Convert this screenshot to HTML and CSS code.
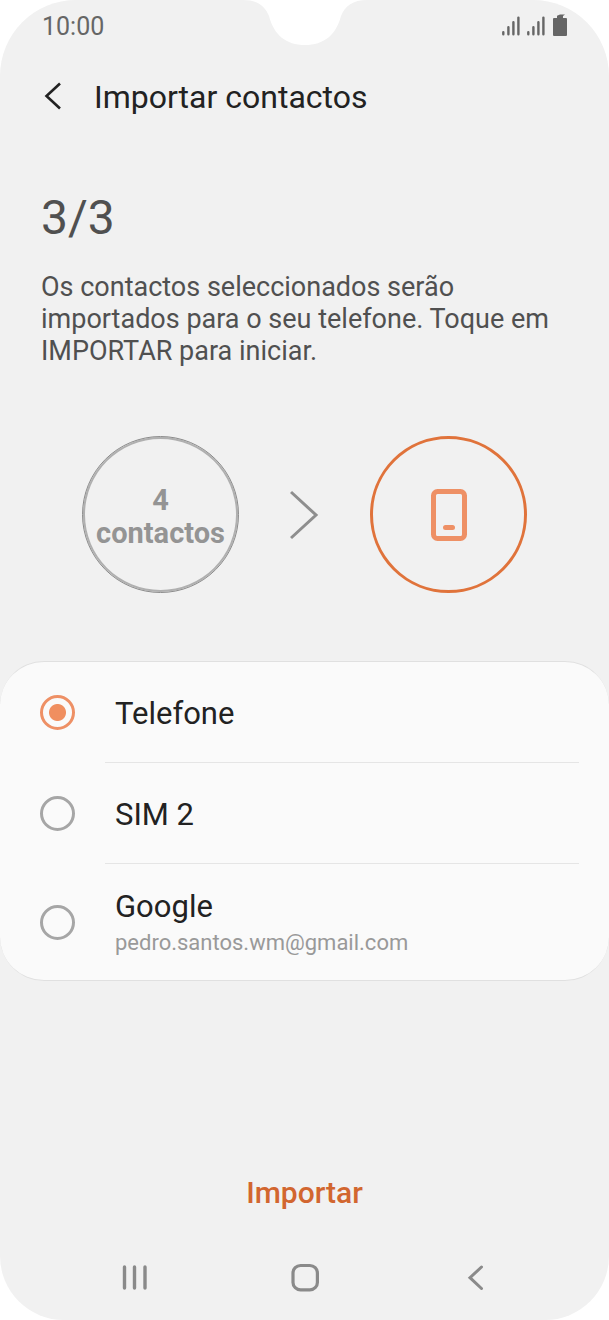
FILE: index.html
```html
<!DOCTYPE html>
<html lang="pt">
<head>
<meta charset="utf-8">
<meta name="viewport" content="width=device-width, initial-scale=1">
<title>Importar contactos</title>
<link rel="stylesheet" href="styles.css">
</head>
<body>
<div class="screen">
  <svg class="notch" viewBox="0 0 124 46" aria-hidden="true"><path d="M0 0C14 0 22 6 26 16C31 35 43 45 62 45S93 35 98 16C102 6 110 0 124 0Z" fill="#fff"/></svg>

  <div class="status">
    <time class="clock">10:00</time>
    <svg class="status-icons" width="67" height="24" viewBox="0 0 67 24" aria-hidden="true">
      <g stroke="#666" stroke-width="2.4" stroke-linecap="round">
        <path d="M2.3 18.3V20.300M7.4 13.3V20.300M12.4 8.3V20.300M17.4 3.600V20.300"/>
        <path d="M27.3 18.3V20.300M32.4 13.3V20.300M37.4 8.3V20.300M42.4 3.600V20.300"/>
      </g>
      <path d="M53 4H56V1.800L59 0.500H64L62 2V4H65Q66 4 66 5V21Q66 22 65 22H53Q52 22 52 21V5Q52 4 53 4Z" fill="#666"/>
    </svg>
  </div>

  <header class="header">
    <button class="icon-button" type="button" aria-label="Voltar">
      <svg width="22" height="30" viewBox="0 0 22 30"><path d="M18 1.500L4.500 14L18 26.500" fill="none" stroke="#222" stroke-width="2.6"/></svg>
    </button>
    <h1 class="title">Importar contactos</h1>
  </header>

  <main class="content">
    <section class="intro">
      <p class="step">3/3</p>
      <p class="description">Os contactos seleccionados serão importados para o seu telefone. Toque em IMPORTAR para iniciar.</p>
    </section>

    <div class="transfer">
      <div class="circle circle-source"><span>4</span><span>contactos</span></div>
      <svg width="30" height="50" viewBox="0 0 30 50" aria-hidden="true"><path d="M1 2L26 25L1 48" fill="none" stroke="#8e8e8e" stroke-width="3"/></svg>
      <div class="circle circle-target">
        <svg width="36" height="52" viewBox="0 0 36 52" aria-label="Telefone" role="img">
          <rect x="2.500" y="2.500" width="31" height="47" rx="4" fill="none" stroke="#ee9065" stroke-width="5"/>
          <path d="M14.500 38.500H21.500" stroke="#ee9065" stroke-width="5" stroke-linecap="round"/>
        </svg>
      </div>
    </div>

    <form class="card">
      <label class="option">
        <input class="radio" type="radio" name="destino" checked>
        <span class="option-body"><span class="name">Telefone</span></span>
      </label>
      <label class="option">
        <input class="radio" type="radio" name="destino">
        <span class="option-body"><span class="name">SIM 2</span></span>
      </label>
      <label class="option option-tall">
        <input class="radio" type="radio" name="destino">
        <span class="option-body"><span class="name">Google</span><span class="email">pedro.santos.wm@gmail.com</span></span>
      </label>
    </form>
  </main>

  <footer class="footer">
    <button class="import" type="button">Importar</button>
    <nav class="nav">
      <button class="icon-button" type="button" aria-label="Recentes">
        <svg width="28" height="30" viewBox="0 0 28 30"><path d="M4.500 5V26M14.500 5V26M25 5V26" stroke="#8a8a8a" stroke-width="3.400" stroke-linecap="round"/></svg>
      </button>
      <button class="icon-button" type="button" aria-label="Início">
        <svg width="28" height="30" viewBox="0 0 28 30"><rect x="2" y="3.500" width="24.400" height="24.400" rx="7.500" fill="none" stroke="#8a8a8a" stroke-width="3.200"/></svg>
      </button>
      <button class="icon-button" type="button" aria-label="Voltar">
        <svg width="28" height="30" viewBox="0 0 28 30"><path d="M20.500 5L9 15.700L20.500 26.500" fill="none" stroke="#8a8a8a" stroke-width="3" stroke-linecap="round"/></svg>
      </button>
    </nav>
  </footer>
</div>
</body>
</html>
```
FILE: styles.css
```css
* {
  box-sizing: border-box;
}

body {
  margin: 0;
  background: #fff;
  font-family: Roboto, "Liberation Sans", sans-serif;
  color: #222;
}

h1,
p {
  margin: 0;
}

button {
  border: 0;
  padding: 0;
  background: none;
  font: inherit;
  color: inherit;
}

.screen {
  position: relative;
  display: flex;
  flex-direction: column;
  min-height: 100vh;
  background: #f1f1f1;
  border-radius: 76px 76px 64px 64px;
}

.notch {
  position: absolute;
  top: 0;
  left: 50%;
  width: 124px;
  height: 46px;
  transform: translateX(-50%);
}

.status {
  display: flex;
  align-items: center;
  justify-content: space-between;
  height: 52px;
  padding: 0 41px 0 42px;
}

.clock {
  font-size: 25px;
  color: #666;
}

.header {
  display: flex;
  align-items: center;
  gap: 30px;
  height: 90px;
  padding: 0 42px;
}

.icon-button {
  display: flex;
}

.title {
  font-size: 32px;
  font-weight: 400;
}

.intro {
  padding: 46px 40px 0 41px;
}

.step {
  font-size: 48px;
  line-height: 60px;
  color: #505050;
}

.description {
  margin-top: 23px;
  font-size: 27px;
  line-height: 32px;
  color: #505050;
}

.transfer {
  display: flex;
  align-items: center;
  justify-content: space-between;
  padding: 69px 82px 68px;
}

.circle {
  display: flex;
  flex-direction: column;
  align-items: center;
  justify-content: center;
  width: 157px;
  height: 157px;
  border-radius: 50%;
}

.circle-source {
  padding-top: 4px;
  border: 1px solid #8c8c8c;
  box-shadow: inset 0 0 0 2px #b0b0b0;
  font-size: 29px;
  font-weight: 700;
  line-height: 33px;
  color: #949494;
}

.circle-target {
  border: 3px solid #e0733b;
}

.card {
  background: #fafafa;
  border-top: 1px solid #e0e0e0;
  border-bottom: 1px solid #e0e0e0;
  border-radius: 44px;
}

.option {
  display: flex;
  align-items: center;
  gap: 30px;
  height: 101px;
  padding: 0 30px 0 40px;
}

.option-tall {
  height: 116px;
}

.radio {
  appearance: none;
  flex: none;
  width: 35px;
  height: 35px;
  margin: 0;
  border: 3px solid #a6a6a6;
  border-radius: 50%;
}

.radio:checked {
  border-color: #ee9065;
  background: radial-gradient(circle, #f08f60 8px, transparent 9px);
}

.option-body {
  display: flex;
  flex: 1;
  flex-direction: column;
  justify-content: center;
  height: 100%;
  padding: 4px 0 0 10px;
  border-bottom: 1px solid #e5e5e5;
}

.option-tall .option-body {
  border-bottom: 0;
}

.name {
  font-size: 31px;
  line-height: 38px;
}

.email {
  font-size: 22px;
  line-height: 34px;
  color: #999;
}

.footer {
  display: flex;
  flex-direction: column;
  align-items: center;
  margin-top: auto;
}

.import {
  padding: 8px 24px;
  font-size: 30px;
  line-height: 38px;
  font-weight: 500;
  color: #d2662f;
}

.nav {
  display: flex;
  justify-content: space-between;
  width: 100%;
  margin-top: 42px;
  padding: 0 120px 28px;
}
```
